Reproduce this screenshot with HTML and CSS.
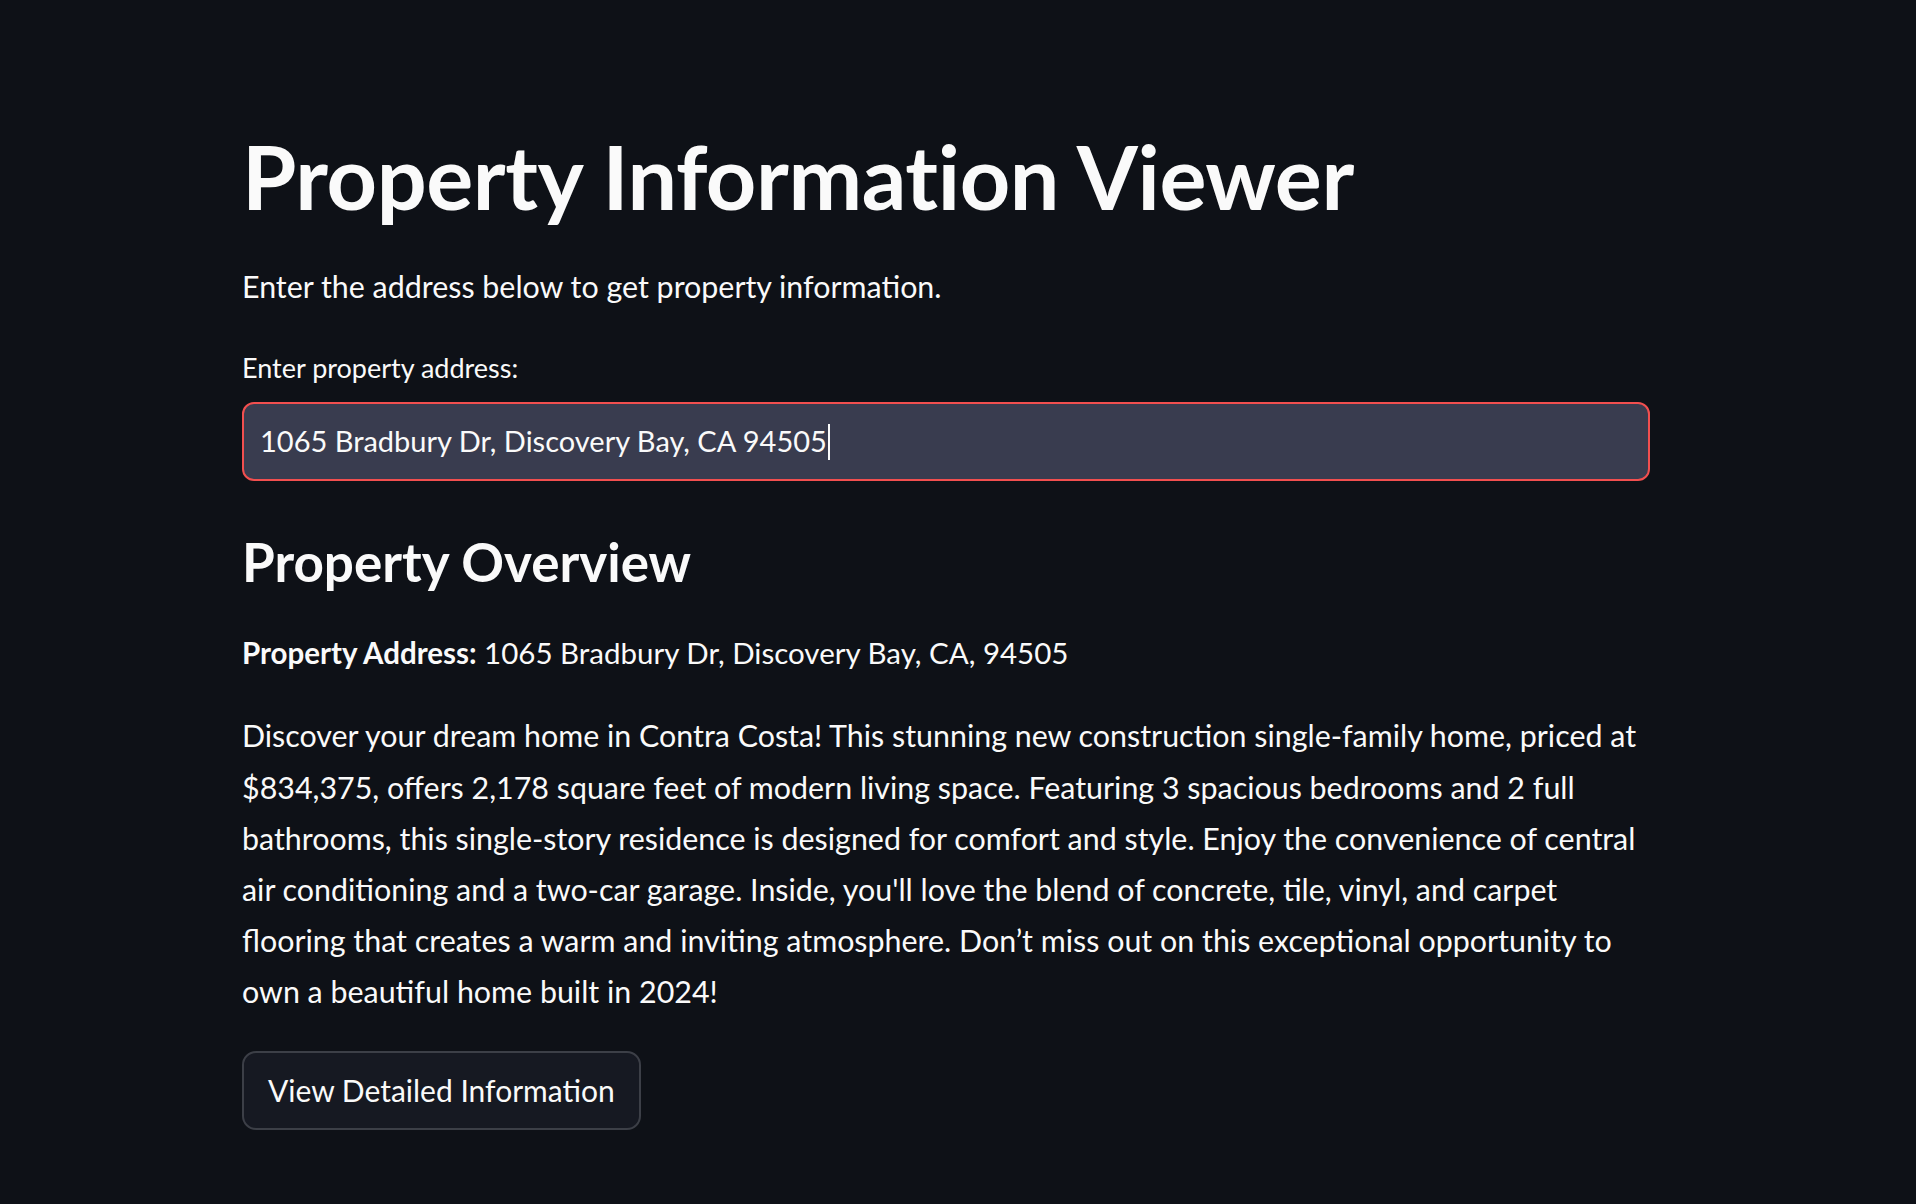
FILE: index.html
```html
<!DOCTYPE html>
<html lang="en">
<head>
<meta charset="utf-8">
<title>Property Information Viewer</title>
<link rel="stylesheet" href="styles.css">
</head>
<body>
<main class="app">
  <div class="block">
    <h1 class="title">Property Information Viewer</h1>
    <p class="intro">Enter the address below to get property information.</p>
    <label class="field-label" for="addr">Enter property address:</label>
    <div class="field" id="addr"><span class="field-value">1065 Bradbury Dr, Discovery Bay, CA 94505</span><span class="caret"></span></div>
    <h3 class="subheader">Property Overview</h3>
    <p class="address"><strong>Property Address:</strong> 1065 Bradbury Dr, Discovery Bay, CA, 94505</p>
    <p class="desc">Discover your dream home in Contra Costa! This stunning new construction single-family home, priced at $834,375, offers 2,178 square feet of modern living space. Featuring 3 spacious bedrooms and 2 full bathrooms, this single-story residence is designed for comfort and style. Enjoy the convenience of central air conditioning and a two-car garage. Inside, you'll love the blend of concrete, tile, vinyl, and carpet flooring that creates a warm and inviting atmosphere. Don’t miss out on this exceptional opportunity to own a beautiful home built in 2024!</p>
    <button class="btn" type="button">View Detailed Information</button>
  </div>
</main>
</body>
</html>
```

FILE: styles.css
```css
html, body {
  margin: 0;
  padding: 0;
  background: #0e1117;
  color: #fafafa;
  font-family: Lato, "Noto Sans", sans-serif;
}

.app {
  min-height: 1204px;
  box-sizing: border-box;
  padding: 124px 0 0 242px;
}

.block {
  width: 1408px;
  display: flex;
  flex-direction: column;
  align-items: flex-start;
}

.title {
  margin: 0;
  font-size: 88px;
  line-height: 104px;
  font-weight: 700;
  letter-spacing: -0.4px;
}

.intro {
  margin: 33px 0 0;
  font-size: 30.4px;
  line-height: 51.2px;
}

.field-label {
  margin: 36px 0 0;
  font-size: 27px;
  line-height: 40px;
}

.field {
  margin-top: 14px;
  width: 100%;
  height: 79px;
  box-sizing: border-box;
  border: 2px solid #f24f4f;
  border-radius: 12px;
  background: #393c4f;
  display: flex;
  align-items: center;
  padding: 0 16px;
  font-size: 29px;
  line-height: 1.2;
}

.caret {
  display: inline-block;
  width: 2px;
  height: 36px;
  background: #fafafa;
  margin-left: 1px;
}

.subheader {
  margin: 48px 0 0;
  font-size: 53px;
  line-height: 65px;
  font-weight: 700;
}

.address {
  margin: 33px 0 0;
  font-size: 29.5px;
  line-height: 51.2px;
}

.address strong {
  font-weight: 700;
}

.desc {
  margin: 32px 0 0;
  font-size: 30.4px;
  line-height: 51.2px;
  width: 1400px;
}

.btn {
  margin: 33px 0 0;
  height: 79px;
  box-sizing: border-box;
  padding: 0 24px;
  border: 2px solid #3c3f47;
  border-radius: 14px;
  background: #161922;
  color: #fafafa;
  font-family: inherit;
  font-size: 30px;
  line-height: 1.2;
}
```
